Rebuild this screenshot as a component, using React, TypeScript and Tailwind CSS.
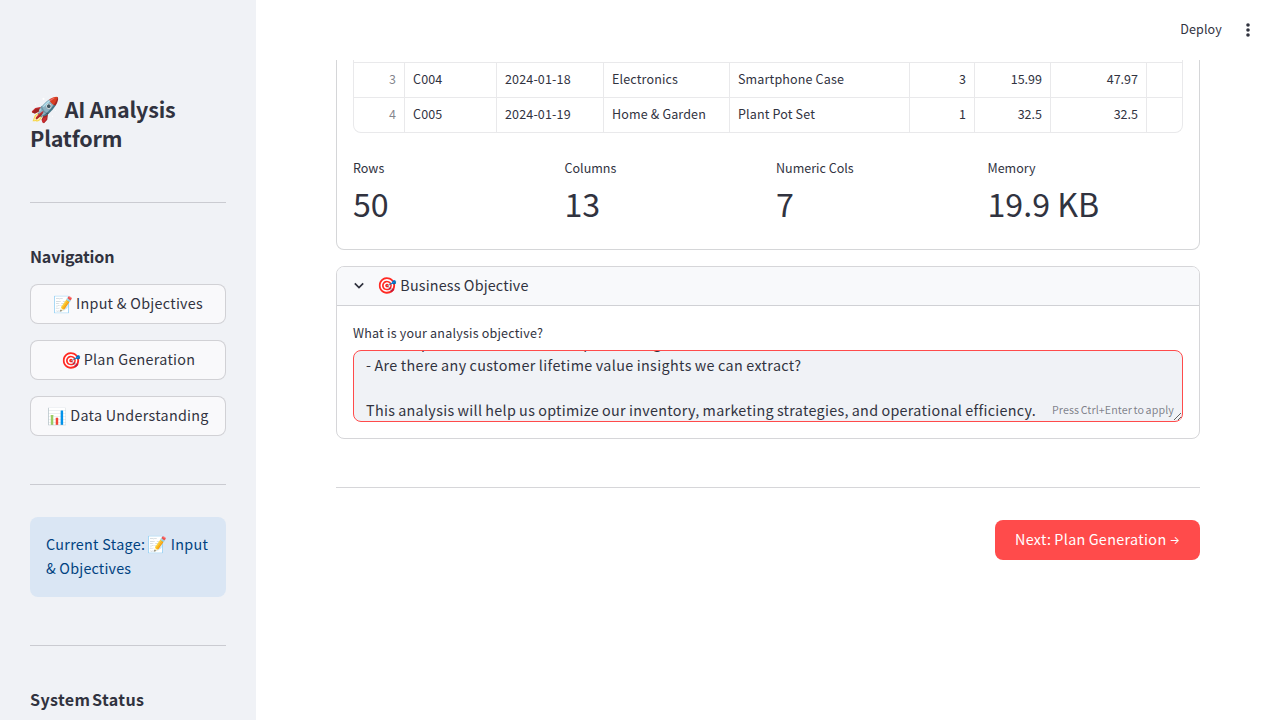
import React from 'react';

const rows = [
  ['3', 'C004', '2024-01-18', 'Electronics', 'Smartphone Case', '3', '15.99', '47.97'],
  ['4', 'C005', '2024-01-19', 'Home & Garden', 'Plant Pot Set', '1', '32.5', '32.5'],
];

const metrics = [
  ['Rows', '50'],
  ['Columns', '13'],
  ['Numeric Cols', '7'],
  ['Memory', '19.9 KB'],
];

function NavButton({ icon, label }: { icon: string; label: string }) {
  return (
    <button className="flex h-10 w-full items-center justify-center gap-[3px] rounded-lg border border-[#31333f]/20 bg-[#f9f9fb] pb-[1px] leading-[26px] tracking-[0.28px] whitespace-pre">
      <span className="text-[16px] tracking-normal">{icon}</span>
      <span>{label}</span>
    </button>
  );
}

function Sidebar() {
  return (
    <aside className="h-[720px] w-64 shrink-0 overflow-hidden bg-[#f0f2f6] pr-[30px] pl-[30px]">
      <h2 className="mt-[94px] text-[21.5px] leading-[28.8px] font-semibold tracking-[-0.2px] whitespace-pre">
        <span className="text-[24px] tracking-normal">🚀</span> AI Analysis{'\n'}Platform
      </h2>
      <hr className="mt-[49px] border-[#31333f]/20" />
      <h3 className="mt-[41px] text-[16.1px] leading-6 font-semibold tracking-[-0.2px]">Navigation</h3>
      <nav className="mt-4 flex flex-col gap-4">
        <NavButton icon="📝" label="Input & Objectives" />
        <NavButton icon="🎯" label="Plan Generation" />
        <NavButton icon="📊" label="Data Understanding" />
      </nav>
      <hr className="mt-12 border-[#31333f]/20" />
      <div className="mt-8 h-20 rounded-lg bg-[#dae6f4] px-4 pt-[14.5px] leading-6 tracking-[0.3px] whitespace-pre text-[#004280]">
        Current Stage:<span className="ml-[2px] text-[16px] tracking-normal">📝</span> Input{'\n'}
        <span className="tracking-[0.2px]">&amp; Objectives</span>
      </div>
      <hr className="mt-12 border-[#31333f]/20" />
      <h3 className="mt-[41px] text-[16.1px] leading-6 font-semibold tracking-[0.35px] [word-spacing:-2.2px]">System Status</h3>
    </aside>
  );
}

export default function App() {
  return (
    <div className="flex h-[720px] w-[1280px] overflow-hidden bg-white font-['Noto_Sans_CJK_SC','Noto_Sans',sans-serif] text-[14.33px] text-[#31333f]">
      <Sidebar />
      <div className="flex flex-1 flex-col">
        <header className="flex h-[60px] shrink-0 items-center justify-end gap-[19px] pr-[25px] text-[12.54px]">
          <span className="pb-[2px] tracking-[0.15px]">Deploy</span>
          <svg width="14" height="14" viewBox="0 0 14 14" fill="#31333f">
            <circle cx="7" cy="2" r="1.8" />
            <circle cx="7" cy="7" r="1.8" />
            <circle cx="7" cy="12" r="1.8" />
          </svg>
        </header>
        <main className="mx-20 flex flex-col">
          <section className="h-[190px] rounded-b-lg border border-t-0 border-[#31333f]/20 px-4">
            <div className="overflow-hidden rounded-b-lg border border-t-0 border-[#e9e9eb] pt-[2px] text-[12.54px]">
              {rows.map((row) => (
                <div
                  key={row[0]}
                  className="grid h-[35px] grid-cols-[51px_92px_107px_126px_180px_65px_76px_96px_1fr] items-stretch border-t border-[#e9e9eb] leading-[32px] whitespace-pre"
                >
                  {row.map((cell, i) => (
                    <div
                      key={i}
                      className={
                        i === 0
                          ? 'border-r border-[#e9e9eb] px-2 text-right text-[#31333f]/60'
                          : i > 4
                            ? 'border-r border-[#e9e9eb] px-2 text-right'
                            : 'border-r border-[#e9e9eb] px-2 tracking-[0.14px]'
                      }
                    >
                      {cell}
                    </div>
                  ))}
                  <div />
                </div>
              ))}
            </div>
            <div className="mt-6 grid grid-cols-4 gap-4">
              {metrics.map(([label, value]) => (
                <div key={label}>
                  <div className="text-[12.54px] leading-[21px]">{label}</div>
                  <div className="text-[32.2px] leading-[50px]">{value}</div>
                </div>
              ))}
            </div>
          </section>
          <section className="mt-4 h-[173px] overflow-hidden rounded-lg border border-[#31333f]/20">
            <div className="flex h-[39px] items-center border-b border-[#31333f]/20 bg-[#f8f9fb] pl-[17px]">
              <svg width="10" height="8" viewBox="0 0 10 8" fill="none" stroke="#31333f" strokeWidth="1.7">
                <path d="M0.8 1.4 L5 5.6 L9.2 1.4" />
              </svg>
              <span className="ml-[13px] pb-[4.5px] tracking-[0.16px] whitespace-pre">
                <span className="text-[16px] tracking-normal">🎯</span> Business Objective
              </span>
            </div>
            <div className="px-4 pt-4">
              <label className="block text-[12.54px] leading-[21px] tracking-[0.2px]">What is your analysis objective?</label>
              <div className="relative mt-[7px] h-[72px] resize-y overflow-hidden rounded-lg border border-[#ff4b4b] bg-[#f0f2f6] px-3">
                <div className="-mt-[19.6px] leading-[22.4px] tracking-[0.3px] whitespace-pre">
                  - Which products have the best profit margins?
                </div>
                <div className="mt-[0.6px] leading-[22.4px] tracking-[0.38px] whitespace-pre [word-spacing:-0.5px]">
                  - Are there any customer lifetime value insights we can extract?
                </div>
                <div className="mt-[22.4px] leading-[22.4px] tracking-[0.31px] whitespace-pre [word-spacing:-0.5px]">
                  This analysis will help us optimize our inventory, marketing strategies, and operational efficiency.
                </div>
                <span className="absolute right-2 bottom-0 text-[10.7px] leading-[22px] tracking-[0.1px] text-[#31333f]/60 [word-spacing:-1px]">
                  Press Ctrl+Enter to apply
                </span>
              </div>
            </div>
          </section>
          <hr className="mt-12 border-[#31333f]/20" />
          <button className="mt-8 flex h-10 w-[205px] items-center justify-center gap-[3px] self-end rounded-lg bg-[#ff4b4b] pb-[2px] tracking-[0.36px] text-white [word-spacing:-0.6px]">
            <span>Next: Plan Generation</span>
            <span className="pt-[2px] font-[Inter] text-[11px] leading-4 tracking-normal">→</span>
          </button>
        </main>
      </div>
    </div>
  );
}
